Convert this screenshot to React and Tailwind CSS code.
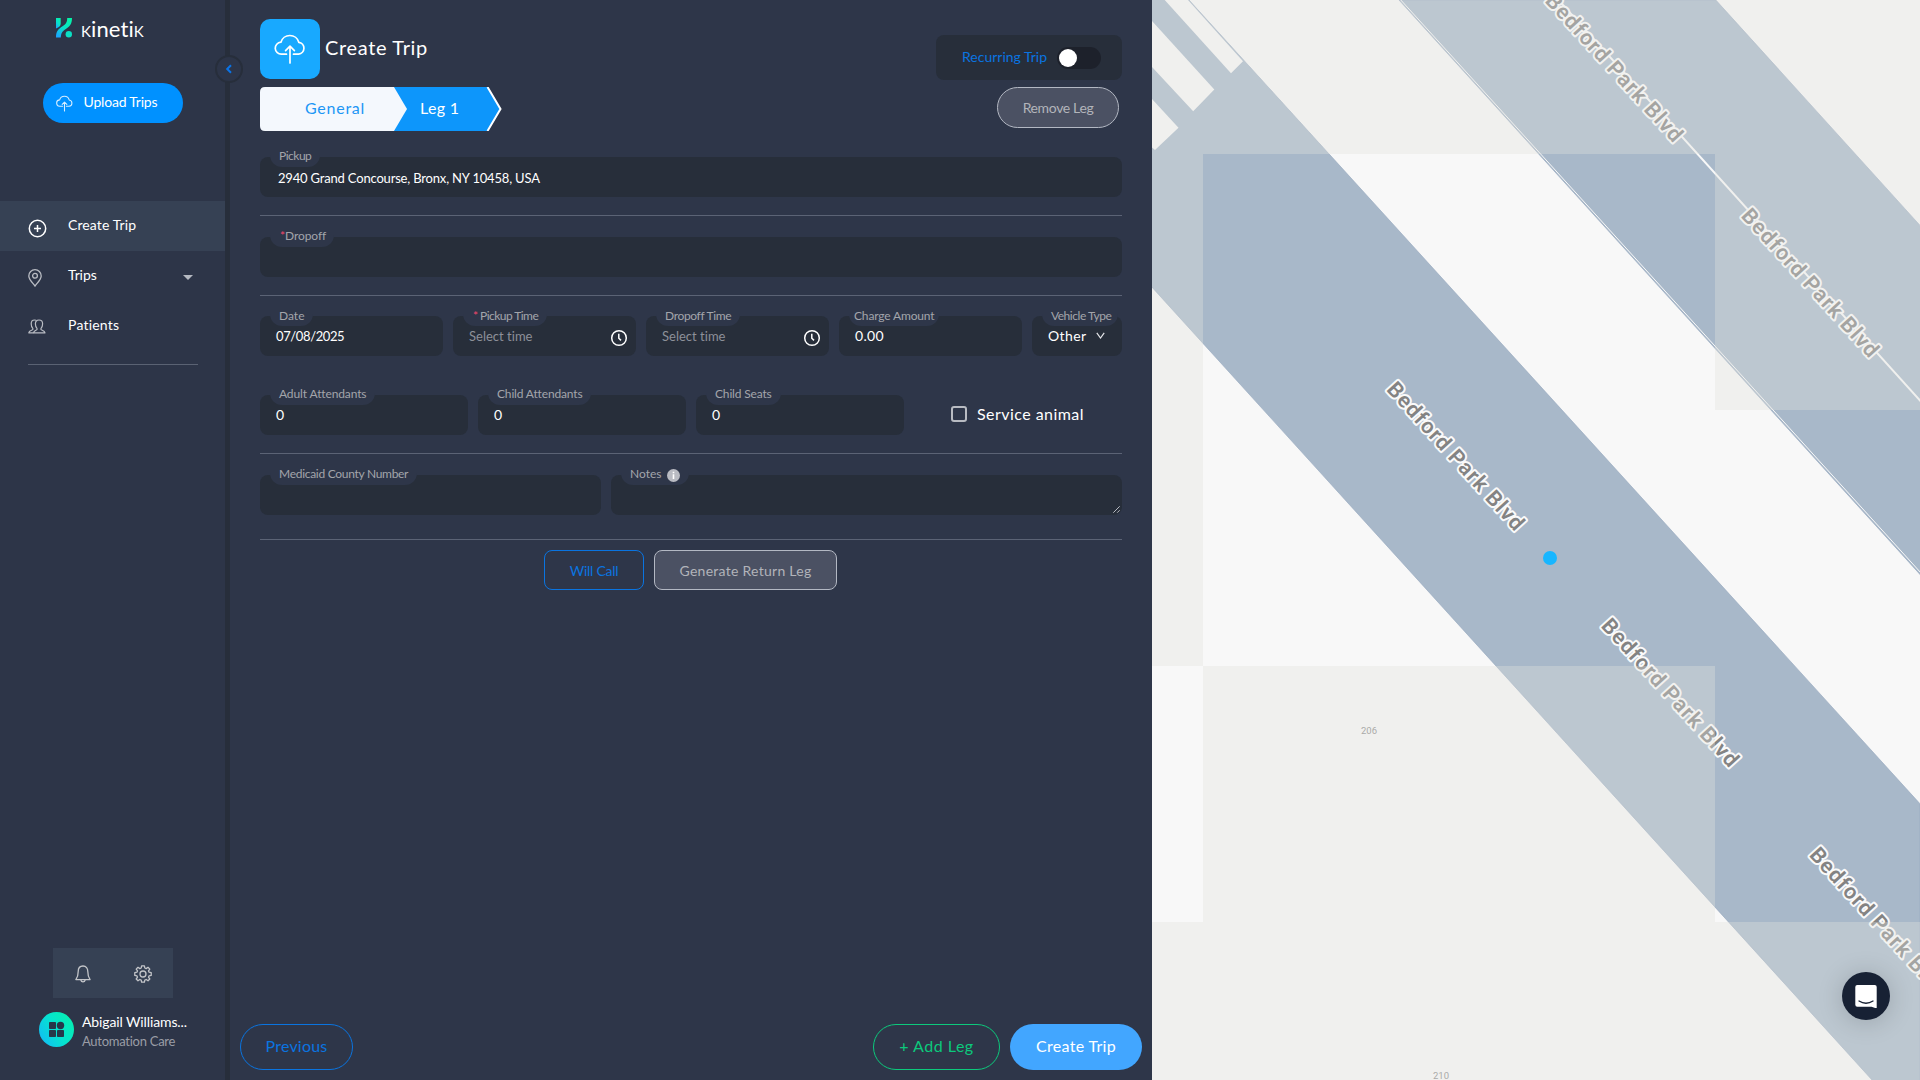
import React from "react";

function CloudUpload({ className, strokeWidth = 1.6 }) {
  return (
    <svg className={className} viewBox="0 0 32 32" fill="none" stroke="currentColor" strokeWidth={strokeWidth} strokeLinecap="round" strokeLinejoin="round">
      <path d="M12.5 21.2H7.6a6 6 0 0 1-.7-12A9.3 9.3 0 0 1 24.8 9.300A6 6 0 0 1 24.600 21.200H19.500" />
      <path d="M16 30V13.600M11.600 17.600L16 13.200L20.400 17.600" />
    </svg>
  );
}

function Logo() {
  return (
    <svg className="h-5 w-4" viewBox="0 0 16 20">
      <defs>
        <linearGradient id="logo" x1="0.8" y1="0" x2="0.2" y2="1">
          <stop offset="0" stopColor="#05f4a8" />
          <stop offset="0.55" stopColor="#08e0cc" />
          <stop offset="1" stopColor="#1aa6ff" />
        </linearGradient>
      </defs>
      <path fill="url(#logo)" d="M0 0H4.700V5.500C4.700 8 3 9.300 0 10.500Z" />
      <path fill="url(#logo)" d="M11.200 0H16C16 6.500 13.500 8.500 9.500 11.200C6 13.500 5 15.500 4.800 19.500H0C0 13.500 2 11.200 6.500 8.300C9.800 6.200 11.200 4.500 11.200 0Z" />
      <circle cx="12.800" cy="16.300" r="3.200" fill="#0be0c4" />
    </svg>
  );
}

function Clock() {
  return (
    <svg className="size-[18px] text-white" viewBox="0 0 18 18" fill="none" stroke="currentColor" strokeWidth="1.500">
      <circle cx="9" cy="9" r="7.300" />
      <path d="M8.800 4.800V9.200L11 11.400" />
    </svg>
  );
}

const NOTCH = "absolute left-[10px] -top-[11px] flex h-[21px] items-center whitespace-nowrap rounded-b-[12px] bg-[#2e3649] text-[12px] leading-[18px] text-[#a3a5ab]";

function Field({ label, labelClass = "", notch = "px-[9px]", drop = "pb-[2px]", star, starClass = "mr-[2px]", className = "", extra, children }) {
  return (
    <div className={`relative flex h-10 items-center rounded-[8px] bg-[#272e3a] ${className}`}>
      <div className={`${NOTCH} ${notch} ${drop}`}>
        {star && <span className={`text-[#f5476d] ${starClass}`}>*</span>}
        <span className={labelClass}>{label}</span>
        {extra}
      </div>
      {children}
    </div>
  );
}

function Rule({ className = "" }) {
  return <div className={`h-px bg-[#5b6375] ${className}`} />;
}

function Sidebar() {
  return (
    <aside className="flex w-[225px] shrink-0 flex-col bg-[#2d3548] text-[14px] text-white">
      <div className="mt-[18px] flex h-5 items-center pl-14">
        <Logo />
        <span className="ml-[9px] mt-px text-[22px] leading-5 tracking-[0.1px] [font-variant-ligatures:none]">
          <span className="[font-variant-caps:small-caps]">k</span>ineti<span className="[font-variant-caps:small-caps]">k</span>
        </span>
      </div>
      <button className="mt-[45px] ml-[43px] flex h-10 w-[140px] items-center rounded-full bg-[#0091ff] pl-[12.500px]">
        <CloudUpload className="size-[17px] text-[#d8eeff]" strokeWidth={2} />
        <span className="ml-[11px] pb-[3px] tracking-[-0.2px]">Upload Trips</span>
      </button>
      <nav className="mt-[78px]">
        <div className="flex h-[50px] items-center bg-[#364154] pl-[28px]">
          <svg className="mt-[4px] size-[19px]" viewBox="0 0 19 19" fill="none" stroke="currentColor" strokeWidth="1.500">
            <circle cx="9.500" cy="9.500" r="8.200" />
            <path d="M9.500 6V13M6 9.500H13" />
          </svg>
          <span className="ml-[21px] pb-[3px] tracking-[0.12px]">Create Trip</span>
        </div>
        <div className="flex h-[50px] items-center pl-[28px]">
          <svg className="mt-[3px] h-[18px] w-[14px] text-[#b9bcc3]" viewBox="0 0 14 18" fill="none" stroke="currentColor" strokeWidth="1.300">
            <path d="M7 17C4.500 13.600 .8 10.400 .8 6.900A6.200 6.200 0 0 1 13.200 6.900C13.200 10.400 9.500 13.600 7 17Z" />
            <circle cx="7" cy="6.800" r="2.400" />
          </svg>
          <span className="ml-[26px] pb-[3px] tracking-[-0.1px]">Trips</span>
          <svg className="ml-auto mr-[32px] mt-[2px] h-[5px] w-[10px]" viewBox="0 0 10 5"><path d="M0 0H10L5 5Z" fill="#b5b9c1" /></svg>
        </div>
        <div className="flex h-[50px] items-center pl-[28px]">
          <svg className="mt-[1px] h-[15px] w-[18px] text-[#b9bcc3]" viewBox="0 0 18 15" fill="none" stroke="currentColor" strokeWidth="1.200" strokeLinejoin="round">
            <path d="M11 1C13.400 1 14.600 2.600 14.600 4.800C14.600 7 13.800 8.600 13 9.400V10.600C14 11.400 16.600 11.600 17 13.800H5.500C5.900 11.600 8 11.400 9 10.600V9.400C8.200 8.600 7.400 7 7.400 4.800C7.400 2.600 8.600 1 11 1Z" />
            <path d="M8 1.300C7.500 1 7 1 6.500 1C4.300 1 3.200 2.600 3.200 4.800C3.200 7 4 8.600 4.800 9.400V10.600C3.800 11.400 1 11.600 .8 13.800H5.500" />
          </svg>
          <span className="ml-[22px] pb-[3px] tracking-[0.2px]">Patients</span>
        </div>
      </nav>
      <div className="mt-[13px] ml-[28px] h-px w-[170px] bg-[#5a6273]" />
      <div className="mt-auto ml-[53px] grid h-[50px] w-[120px] grid-cols-2 place-items-center bg-[#364154] pt-[2px] text-[#c3c5c9]">
        <svg className="h-[19px] w-4" viewBox="0 0 16 19" fill="none" stroke="currentColor" strokeWidth="1.300" strokeLinejoin="round">
          <path d="M8 1C4.800 1 3.200 3.400 3.200 6.400C3.200 10.500 2.800 12.200 .9 14.600H15.100C13.200 12.200 12.800 10.500 12.800 6.400C12.800 3.400 11.200 1 8 1Z" />
          <path d="M5.800 15A2.300 2.600 0 0 0 10.200 15" />
        </svg>
        <svg className="size-[18px]" viewBox="0 0 18 18" fill="none" stroke="currentColor" strokeWidth="1.300" strokeLinejoin="round">
          <path d="M7.600 .8H10.400L10.800 3L12.200 3.600L14 2.300L15.800 4.100L14.500 5.900L15.100 7.200L17.200 7.600V10.400L15.100 10.800L14.500 12.200L15.800 14L14 15.800L12.200 14.500L10.800 15.100L10.400 17.200H7.600L7.200 15.100L5.800 14.500L4 15.800L2.200 14L3.500 12.200L2.900 10.800L.8 10.400V7.600L2.900 7.200L3.500 5.900L2.200 4.100L4 2.300L5.800 3.600L7.200 3Z" />
          <circle cx="9" cy="9" r="3" />
        </svg>
      </div>
      <div className="mt-[14px] mb-[33px] ml-[39px] flex h-[35px] items-center">
        <svg className="size-[35px]" viewBox="0 0 35 35">
          <defs>
            <linearGradient id="avatar" x1="0" y1="0.8" x2="1" y2="0.2">
              <stop offset="0" stopColor="#12bdf5" />
              <stop offset="0.5" stopColor="#05e3cf" />
              <stop offset="1" stopColor="#06efaf" />
            </linearGradient>
          </defs>
          <circle cx="17.500" cy="17.500" r="17.500" fill="url(#avatar)" />
          <g fill="#27374a">
            <rect x="10" y="10" width="7" height="7" rx="0.800" />
            <circle cx="21.500" cy="13.500" r="3.700" />
            <rect x="10" y="18" width="7" height="7" rx="0.800" />
            <rect x="18" y="18" width="7" height="7" rx="0.800" />
          </g>
        </svg>
        <div className="ml-2 pt-[4px]">
          <div className="leading-[20px] tracking-[-0.12px]">Abigail Williams...</div>
          <div className="text-[13px] leading-[19px] tracking-[-0.27px] text-[#9a9da6]">Automation Care</div>
        </div>
      </div>
    </aside>
  );
}

function Divider() {
  return (
    <div className="relative w-[5px] shrink-0 bg-[#272e3b]">
      <div className="absolute top-[55px] -left-[10px] z-10 flex size-7 items-center justify-center rounded-full border-2 border-[#272e3b] bg-[#2d3548]">
        <svg className="size-2.5" viewBox="0 0 10 10" fill="none" stroke="#0a74e8" strokeWidth="2"><path d="M7 1.200L3.200 5L7 8.800" /></svg>
      </div>
    </div>
  );
}

function Form() {
  return (
    <main className="flex w-[922px] shrink-0 flex-col bg-[#2e3649] text-white">
      <div className="flex h-[79px] pl-[30px] pr-[30px] pt-[19px]">
        <div className="flex size-[60px] items-center justify-center rounded-[10px] bg-[#18a9ff]">
          <CloudUpload className="size-[32px]" strokeWidth={1.700} />
        </div>
        <h1 className="ml-[5px] mt-[14px] text-[20px] leading-7 tracking-[0.66px]">Create Trip</h1>
        <div className="ml-auto mt-4 flex h-[45px] w-[186px] items-center rounded-[8px] bg-[#272e3a] pl-[26px] text-[14px] text-[#0a74e0]">
          <span className="w-[85px] whitespace-nowrap pb-[2px]">Recurring Trip</span>
          <div className="ml-[10px] mt-px flex h-[22px] w-11 items-center rounded-full bg-[#1d212b] px-[2px]">
            <div className="size-[18px] rounded-full bg-white" />
          </div>
        </div>
      </div>

      <div className="mt-2 flex h-11 pl-[30px] pr-[33px]">
        <div className="relative flex h-11 w-[242px] items-center text-[16px]">
          <svg className="absolute inset-0 h-11 w-[242px]" viewBox="0 0 242 44">
            <path d="M134 0H228L241 22L228 44H134Z" fill="#0d96fb" />
            <path d="M227.500 0L240.500 22L227.500 44" fill="none" stroke="#fff" strokeWidth="2" />
            <path d="M5 0H134L147 22L134 44H5Q0 44 0 39V5Q0 0 5 0Z" fill="#f4f8fd" />
          </svg>
          <span className="relative ml-[45px] w-[60px] pb-[3px] tracking-[0.75px] text-[#1c96f5]">General</span>
          <span className="relative ml-[55px] pb-[3px] tracking-[0.34px]">Leg 1</span>
        </div>
        <button className="ml-auto h-[41px] w-[122px] rounded-full border border-[#b3b8c3] bg-[#4b5163] pb-[1px] text-[14px] tracking-[-0.36px] text-[#b2b4ba]">Remove Leg</button>
      </div>

      <div className="mt-[26px] flex flex-col px-[30px] text-[14px]">
        <Field label="Pickup" labelClass="tracking-[-0.5px]">
          <span className="pl-[18px] pt-[4px] text-[13px] tracking-[-0.18px]">2940 Grand Concourse, Bronx, NY 10458, USA</span>
        </Field>
        <Rule className="mt-[18px]" />
        <Field className="mt-[21px]" label="Dropoff" labelClass="tracking-[-0.1px]" star starClass="" notch="pl-[10px] pr-[8px]" />
        <Rule className="mt-[18px]" />

        <div className="mt-5 flex gap-[10px]">
          <Field className="w-[183px] pl-4" label="Date" drop="">
            <span className="pt-[2px] text-[13px] tracking-[-0.38px]">07/08/2025</span>
          </Field>
          <Field className="w-[183px] pl-4" label="Pickup Time" labelClass="tracking-[-0.55px]" star notch="pl-[10px] pr-[9px]" drop="">
            <span className="pt-[2px] text-[13px] tracking-[0.01px] text-[#8d9099]">Select time</span>
            <div className="ml-auto mr-2 mt-1"><Clock /></div>
          </Field>
          <Field className="w-[183px] pl-4" label="Dropoff Time" labelClass="tracking-[-0.35px]" drop="">
            <span className="pt-[2px] text-[13px] tracking-[0.01px] text-[#8d9099]">Select time</span>
            <div className="ml-auto mr-2 mt-1"><Clock /></div>
          </Field>
          <Field className="w-[183px] pl-4" label="Charge Amount" labelClass="tracking-[-0.15px]" notch="pl-[5px] pr-[4px]" drop="">
            <span className="pb-[1px] tracking-[0.3px]">0.00</span>
          </Field>
          <Field className="w-[90px] pl-4" label="Vehicle Type" labelClass="tracking-[-0.47px]" notch="pl-[9px] pr-[7px]" drop="">
            <span className="pb-[1px] tracking-[0.4px]">Other</span>
            <svg className="ml-[9px] mb-[2px] h-[7px] w-[9px]" viewBox="0 0 9 7" fill="none" stroke="#e4e5e8" strokeWidth="1.200"><path d="M.8 .8L4.500 6L8.200 .8" /></svg>
          </Field>
        </div>

        <div className="mt-[39px] flex gap-[10px]">
          <Field className="w-[208px] pl-4" label="Adult Attendants" labelClass="tracking-[-0.12px]"><span className="pb-[1px]">0</span></Field>
          <Field className="w-[208px] pl-4" label="Child Attendants" labelClass="tracking-[-0.16px]"><span className="pb-[1px]">0</span></Field>
          <Field className="w-[208px] pl-4" label="Child Seats" labelClass="tracking-[-0.16px]"><span className="pb-[1px]">0</span></Field>
          <label className="ml-[37px] flex items-center gap-[10px] pb-[2px] text-[16px] tracking-[0.45px]">
            <span className="size-4 rounded-[3px] border-2 border-[#b8bbc2]" />
            <span className="pb-[1px]">Service animal</span>
          </label>
        </div>
        <Rule className="mt-[18px]" />

        <div className="mt-[21px] flex gap-[10px]">
          <Field className="w-[341px]" label="Medicaid County Number" labelClass="tracking-[-0.29px]" />
          <Field
            className="w-[511px] items-end justify-end"
            label="Notes"
            extra={
              <svg className="ml-[6px] mt-[3px] size-[13px]" viewBox="0 0 13 13">
                <circle cx="6.500" cy="6.500" r="6.500" fill="#b9bbc2" />
                <path d="M6.500 2.800V4.200M6.500 5.300V10" stroke="#fff" strokeWidth="1.600" />
              </svg>
            }
          >
            <svg className="mt-auto mr-[2px] mb-[2px] size-[7px]" viewBox="0 0 7 7" fill="none" stroke="#c9ccd2" strokeWidth="0.900">
              <path d="M.3 6.700L6.700 .3M4.200 6.700L6.700 4.200" />
            </svg>
          </Field>
        </div>
        <Rule className="mt-[24px]" />

        <div className="mt-[10px] flex justify-center gap-[10px] pr-[1px]">
          <button className="h-10 w-[100px] rounded-[8px] border border-[#0a74e0] pt-[1px] tracking-[-0.26px] text-[#0a74e0]">Will Call</button>
          <button className="h-10 w-[183px] rounded-[8px] border border-[#b3b8c3] bg-[#4b5163] pt-[1px] tracking-[0.27px] text-[#b2b4ba]">Generate Return Leg</button>
        </div>
      </div>

      <div className="mt-auto mb-[10px] flex h-[46px] gap-[10px] px-[10px] text-[16px]">
        <button className="w-[113px] rounded-full border border-[#0a74e0] pb-[3px] tracking-[0.2px] text-[#0a74e0]">Previous</button>
        <button className="ml-auto w-[127px] rounded-full border border-[#0cc97c] pb-[3px] tracking-[0.5px] text-[#0cc97c]">+ Add Leg</button>
        <button className="w-[132px] rounded-full bg-[#42a6ff] pb-[3px] tracking-[0.32px]">Create Trip</button>
      </div>
    </main>
  );
}

const STREET_LABELS = [
  [1544.3, 1.5],
  [1740.3, 216.6],
  [1385.7, 390],
  [1600.2, 626.5],
  [1808.4, 855.5],
];

function StreetMap() {
  return (
    <section className="relative min-w-0 flex-1 overflow-hidden">
      <svg className="block h-[1080px] w-[768px]" viewBox="1152 0 768 1080">
        <rect x="1152" width="768" height="1080" fill="#f8f8f8" />
        <g fill="#a8b8c9" stroke="#9aabc0" strokeWidth="0.700">
          <path d="M1150 -43L1920 803.800V1132.800L1150 285Z" />
          <path d="M1399 0H1715.800L1921 226.500V575.500Z" />
        </g>
        <g fill="#f8f8f8">
          <path d="M1189.800 0L1152 -41.600V-50H1240L1500 250L1330 154Z" />
          <path d="M1164.700 0H1188L1243 61.300L1231 73.300Z" />
          <path d="M1152 21L1214.300 89.500L1193.200 111.200L1152 67Z" />
          <path d="M1152 99L1178.500 127.800L1155 150L1152 147.400Z" />
        </g>
        <path d="M1400.800 0L1921 573" stroke="#f8f8f8" strokeWidth="1" fill="none" />
        <path d="M1558.500 0L1921 401.500" stroke="#f8f8f8" strokeWidth="2" fill="none" />
        <g fontFamily="Roboto" fontSize="21.500" fontWeight="600" fill="#838383" stroke="#fafafa" strokeWidth="4" strokeLinejoin="round" paintOrder="stroke">
          {STREET_LABELS.map(([x, y]) => (
            <text key={x} transform={`translate(${x} ${y}) rotate(47.700)`} textLength="192" lengthAdjust="spacing">Bedford Park Blvd</text>
          ))}
        </g>
        <g fontFamily="Roboto" fontSize="9.500" fill="#8c8c8c">
          <text x="1361" y="734">206</text>
          <text x="1433" y="1079">210</text>
        </g>
        <g fill="rgb(225,225,222)" fillOpacity="0.350">
          <rect x="1152" y="0" width="768" height="154" />
          <rect x="1152" y="154" width="51" height="512" />
          <rect x="1715" y="154" width="205" height="256" />
          <rect x="1203" y="666" width="512" height="256" />
          <rect x="1152" y="922" width="768" height="158" />
        </g>
        <circle cx="1550" cy="558" r="7" fill="#18b6ff" />
      </svg>
      <button className="absolute right-[30px] bottom-[60px] flex size-12 items-center justify-center rounded-full bg-[#172134] shadow-[0_2px_26px_rgba(0,0,0,0.18)]">
        <svg className="size-6" viewBox="0 0 24 24">
          <path d="M3.300 1H20.700Q22.700 1 22.700 3V24.500L17.500 22.800H3.300Q1.300 22.800 1.300 20.800V3Q1.300 1 3.300 1Z" fill="#fff" />
          <path d="M5 17Q12 21.500 19 17" fill="none" stroke="#172134" strokeWidth="1.300" strokeLinecap="round" />
        </svg>
      </button>
    </section>
  );
}

export default function App() {
  return (
    <div className="flex h-[1080px] w-[1920px] overflow-hidden bg-[#2e3649] font-['Lato','Open_Sans',sans-serif]">
      <Sidebar />
      <Divider />
      <Form />
      <StreetMap />
    </div>
  );
}
